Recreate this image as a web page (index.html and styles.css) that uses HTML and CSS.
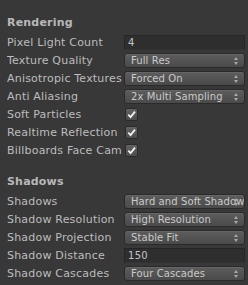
FILE: index.html
```html
<!DOCTYPE html>
<html lang="en">

<head>
    <title>Quality Settings</title>
    <meta charset="UTF-8">
    <meta name="viewport" content="width=device-width, initial-scale=1.0">
    <link rel="stylesheet" href="styles.css">
</head>

<body>
    <div class="panel">
        <h2 class="section-title">Rendering</h2>

        <div class="row">
            <label>Pixel Light Count</label>
            <div class="field">4</div>
        </div>
        <div class="row">
            <label>Texture Quality</label>
            <div class="popup"><span>Full Res</span><i class="arrows"></i></div>
        </div>
        <div class="row">
            <label>Anisotropic Textures</label>
            <div class="popup"><span>Forced On</span><i class="arrows"></i></div>
        </div>
        <div class="row">
            <label>Anti Aliasing</label>
            <div class="popup"><span>2x Multi Sampling</span><i class="arrows"></i></div>
        </div>
        <div class="row">
            <label>Soft Particles</label>
            <div class="toggle"><svg viewBox="0 0 12 12"><path d="M2.5 6.2 L5 8.8 L9.8 2.8" /></svg></div>
        </div>
        <div class="row">
            <label>Realtime Reflection Probes</label>
            <div class="toggle"><svg viewBox="0 0 12 12"><path d="M2.5 6.2 L5 8.8 L9.8 2.8" /></svg></div>
        </div>
        <div class="row">
            <label>Billboards Face Camera Position</label>
            <div class="toggle"><svg viewBox="0 0 12 12"><path d="M2.5 6.2 L5 8.8 L9.8 2.8" /></svg></div>
        </div>

        <h2 class="section-title shadows-title">Shadows</h2>

        <div class="row">
            <label>Shadows</label>
            <div class="popup"><span>Hard and Soft Shadows</span><i class="arrows"></i></div>
        </div>
        <div class="row">
            <label>Shadow Resolution</label>
            <div class="popup"><span>High Resolution</span><i class="arrows"></i></div>
        </div>
        <div class="row">
            <label>Shadow Projection</label>
            <div class="popup"><span>Stable Fit</span><i class="arrows"></i></div>
        </div>
        <div class="row">
            <label>Shadow Distance</label>
            <div class="field">150</div>
        </div>
        <div class="row">
            <label>Shadow Cascades</label>
            <div class="popup"><span>Four Cascades</span><i class="arrows"></i></div>
        </div>
    </div>
</body>

</html>
```

FILE: styles.css
```css
body {
    margin: 0;
    background-color: #383838;
    font-family: "DejaVu Sans", Verdana, sans-serif;
    font-size: 11px;
    letter-spacing: 0.2px;
    color: #bdbdbd;
}

.panel {
    padding: 14px 0 0 7px;
}

.section-title {
    margin: 0 0 1px 0;
    height: 18px;
    line-height: 18px;
    font-size: 11px;
    font-weight: bold;
    color: #b8b8b8;
}

.shadows-title {
    margin-top: 14px;
}

.row {
    display: grid;
    grid-template-columns: 115px 121px;
    column-gap: 2px;
    align-items: center;
    height: 18px;
}

.row label {
    white-space: nowrap;
    overflow: hidden;
}

.field {
    height: 13px;
    line-height: 13px;
    padding: 0 3px;
    background-color: #2e2e2e;
    border: 1px solid #262626;
    border-bottom-color: #333;
    font-size: 10px;
    letter-spacing: 0.3px;
    color: #c4c4c4;
}

.popup {
    position: relative;
    height: 13px;
    line-height: 13px;
    padding: 0 14px 0 6px;
    border: 1px solid #2a2a2a;
    border-radius: 3px;
    background: linear-gradient(#5d5d5d, #4a4a4a);
    box-shadow: inset 0 1px 0 #666;
    font-size: 10px;
    letter-spacing: 0.1px;
    color: #cacaca;
    white-space: nowrap;
    overflow: hidden;
}

.arrows {
    position: absolute;
    right: 5px;
    top: 3px;
    width: 5px;
    height: 8px;
}

.arrows::before,
.arrows::after {
    content: "";
    position: absolute;
    left: 0;
    border-left: 2.5px solid transparent;
    border-right: 2.5px solid transparent;
}

.arrows::before {
    top: 0;
    border-bottom: 3px solid #a8a8a8;
}

.arrows::after {
    bottom: 0;
    border-top: 3px solid #a8a8a8;
}

.toggle {
    width: 11px;
    height: 11px;
    margin-left: 1px;
    border: 1px solid #2a2a2a;
    border-radius: 2px;
    background: linear-gradient(#626262, #4c4c4c);
}

.toggle svg {
    display: block;
    width: 11px;
    height: 11px;
}

.toggle path {
    fill: none;
    stroke: #f0f0f0;
    stroke-width: 2;
}
```
